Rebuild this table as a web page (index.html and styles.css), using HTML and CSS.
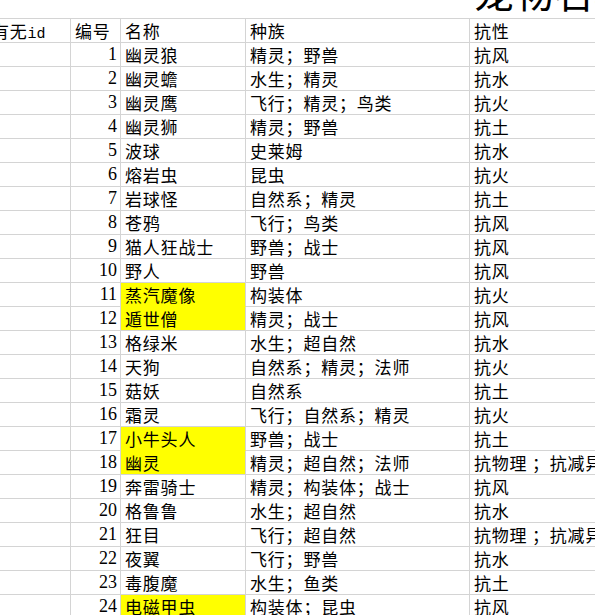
FILE: index.html
```html
<!DOCTYPE html>
<html lang="zh">
<head>
<meta charset="utf-8">
<link rel="stylesheet" href="styles.css">
</head>
<body>
<div class="sheet">
  <div class="title-row"><span class="title">宠物名称表</span></div>

  <div class="c a hA">有无<span class="lat">id</span></div>
  <div class="c b">编号</div>
  <div class="c n">名称</div>
  <div class="c s">种族</div>
  <div class="c r">抗性</div>

  <div class="c a"></div><div class="c b num">1</div><div class="c n">幽灵狼</div><div class="c s">精灵；野兽</div><div class="c r">抗风</div>
  <div class="c a"></div><div class="c b num">2</div><div class="c n">幽灵蟾</div><div class="c s">水生；精灵</div><div class="c r">抗水</div>
  <div class="c a"></div><div class="c b num">3</div><div class="c n">幽灵鹰</div><div class="c s">飞行；精灵；鸟类</div><div class="c r">抗火</div>
  <div class="c a"></div><div class="c b num">4</div><div class="c n">幽灵狮</div><div class="c s">精灵；野兽</div><div class="c r">抗土</div>
  <div class="c a"></div><div class="c b num">5</div><div class="c n">波球</div><div class="c s">史莱姆</div><div class="c r">抗水</div>
  <div class="c a"></div><div class="c b num">6</div><div class="c n">熔岩虫</div><div class="c s">昆虫</div><div class="c r">抗火</div>
  <div class="c a"></div><div class="c b num">7</div><div class="c n">岩球怪</div><div class="c s">自然系；精灵</div><div class="c r">抗土</div>
  <div class="c a"></div><div class="c b num">8</div><div class="c n">苍鸦</div><div class="c s">飞行；鸟类</div><div class="c r">抗风</div>
  <div class="c a"></div><div class="c b num">9</div><div class="c n">猫人狂战士</div><div class="c s">野兽；战士</div><div class="c r">抗风</div>
  <div class="c a"></div><div class="c b num">10</div><div class="c n">野人</div><div class="c s">野兽</div><div class="c r">抗风</div>
  <div class="c a"></div><div class="c b num">11</div><div class="c n hl hl-cont">蒸汽魔像</div><div class="c s">构装体</div><div class="c r">抗火</div>
  <div class="c a"></div><div class="c b num">12</div><div class="c n hl">遁世僧</div><div class="c s">精灵；战士</div><div class="c r">抗风</div>
  <div class="c a"></div><div class="c b num">13</div><div class="c n">格绿米</div><div class="c s">水生；超自然</div><div class="c r">抗水</div>
  <div class="c a"></div><div class="c b num">14</div><div class="c n">天狗</div><div class="c s">自然系；精灵；法师</div><div class="c r">抗火</div>
  <div class="c a"></div><div class="c b num">15</div><div class="c n">菇妖</div><div class="c s">自然系</div><div class="c r">抗土</div>
  <div class="c a"></div><div class="c b num">16</div><div class="c n">霜灵</div><div class="c s">飞行；自然系；精灵</div><div class="c r">抗火</div>
  <div class="c a"></div><div class="c b num">17</div><div class="c n hl hl-cont">小牛头人</div><div class="c s">野兽；战士</div><div class="c r">抗土</div>
  <div class="c a"></div><div class="c b num">18</div><div class="c n hl">幽灵</div><div class="c s">精灵；超自然；法师</div><div class="c r">抗物理 ；抗减异常</div>
  <div class="c a"></div><div class="c b num">19</div><div class="c n">奔雷骑士</div><div class="c s">精灵；构装体；战士</div><div class="c r">抗风</div>
  <div class="c a"></div><div class="c b num">20</div><div class="c n">格鲁鲁</div><div class="c s">水生；超自然</div><div class="c r">抗水</div>
  <div class="c a"></div><div class="c b num">21</div><div class="c n">狂目</div><div class="c s">飞行；超自然</div><div class="c r">抗物理 ；抗减异常</div>
  <div class="c a"></div><div class="c b num">22</div><div class="c n">夜翼</div><div class="c s">飞行；野兽</div><div class="c r">抗水</div>
  <div class="c a"></div><div class="c b num">23</div><div class="c n">毒腹魔</div><div class="c s">水生；鱼类</div><div class="c r">抗土</div>
  <div class="c a"></div><div class="c b num">24</div><div class="c n hl">电磁甲虫</div><div class="c s">构装体；昆虫</div><div class="c r">抗风</div>
</div>
</body>
</html>
```

FILE: styles.css
```css
html, body {
  margin: 0;
  padding: 0;
  overflow: hidden;
  background: #ffffff;
}

.sheet {
  display: grid;
  grid-template-columns: 71px 50px 125px 224px 220px;
  grid-template-rows: 19px;
  grid-auto-rows: 24px;
  width: 690px;
  font-family: "Noto Sans CJK SC", "Liberation Serif", serif;
  font-size: 17px;
  color: #000000;
}

.title-row {
  grid-column: 1 / -1;
  height: 19px;
  box-sizing: border-box;
  border-bottom: 1px solid #d4d4d4;
  display: flex;
  align-items: flex-end;
  padding-left: 474px;
  padding-bottom: 7px;
}

.title {
  font-size: 40px;
  line-height: 40px;
  white-space: nowrap;
  color: #000000;
}

.c {
  box-sizing: border-box;
  border-right: 1px solid #d4d4d4;
  border-bottom: 1px solid #d4d4d4;
  line-height: 23px;
  padding-left: 4px;
  white-space: nowrap;
  overflow: visible;
  letter-spacing: 0.8px;
}

.hA {
  padding-left: 0;
  text-indent: -8px;
  overflow: hidden;
}

.lat {
  font-family: "Liberation Mono", monospace;
  font-size: 15px;
  letter-spacing: 0;
}

.num {
  text-align: right;
  padding-left: 0;
  padding-right: 3px;
  font-family: "Liberation Serif", serif;
  font-size: 18px;
  letter-spacing: 0;
}

.hl {
  background: #ffff00;
}

.hl-cont {
  border-bottom-color: #ffff00;
}

.r {
  border-right: none;
}
```
